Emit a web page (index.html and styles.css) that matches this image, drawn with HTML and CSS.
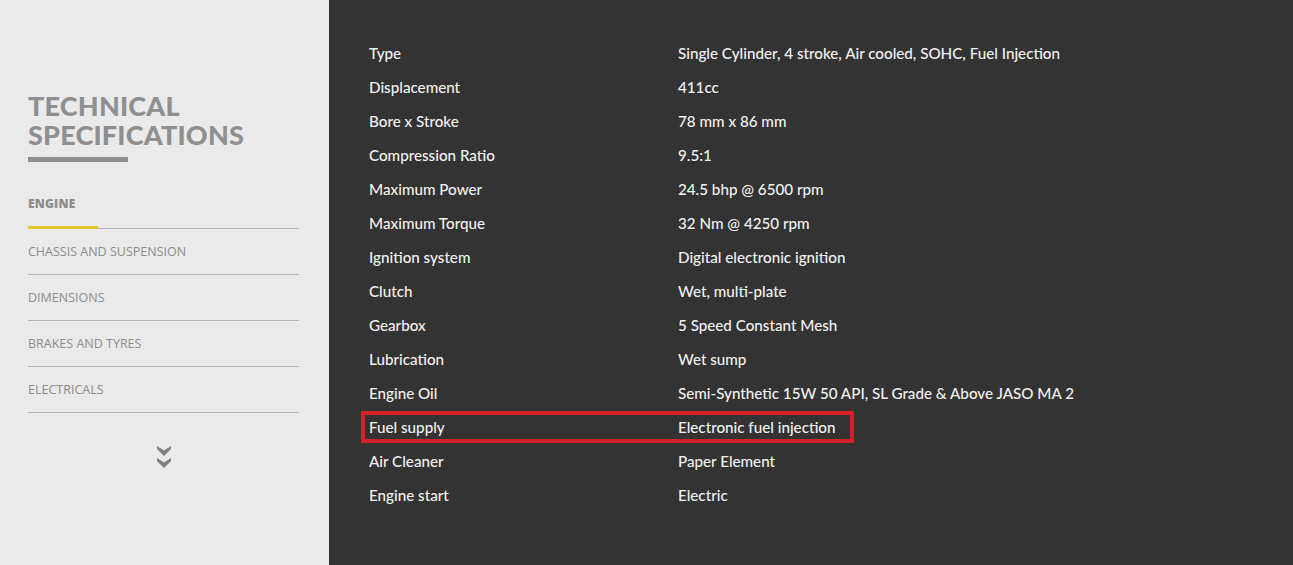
FILE: index.html
```html
<!DOCTYPE html>
<html lang="en">
<head>
<meta charset="utf-8">
<title>Technical Specifications</title>
<link rel="stylesheet" href="styles.css">
</head>
<body>
<div class="page">
  <aside class="side">
    <h1 class="title">TECHNICAL<br>SPECIFICATIONS</h1>
    <div class="title-bar"></div>
    <nav class="nav">
      <a class="nav-item active">ENGINE</a>
      <a class="nav-item">CHASSIS AND SUSPENSION</a>
      <a class="nav-item">DIMENSIONS</a>
      <a class="nav-item">BRAKES AND TYRES</a>
      <a class="nav-item">ELECTRICALS</a>
    </nav>
    <div class="more">
      <svg width="16" height="24" viewBox="0 0 16 24">
        <path d="M1 1 L8 5.5 L15 1 L15 4 L8 11 L1 4 Z" fill="#7d7d7d"/>
        <path d="M1 13 L8 17.5 L15 13 L15 16 L8 23 L1 16 Z" fill="#7d7d7d"/>
      </svg>
    </div>
  </aside>
  <main class="specs">
    <div class="row"><span class="k">Type</span><span class="v">Single Cylinder, 4 stroke, Air cooled, SOHC, Fuel Injection</span></div>
    <div class="row"><span class="k">Displacement</span><span class="v">411cc</span></div>
    <div class="row"><span class="k">Bore x Stroke</span><span class="v">78 mm x 86 mm</span></div>
    <div class="row"><span class="k">Compression Ratio</span><span class="v">9.5:1</span></div>
    <div class="row"><span class="k">Maximum Power</span><span class="v">24.5 bhp @ 6500 rpm</span></div>
    <div class="row"><span class="k">Maximum Torque</span><span class="v">32 Nm @ 4250 rpm</span></div>
    <div class="row"><span class="k">Ignition system</span><span class="v">Digital electronic ignition</span></div>
    <div class="row"><span class="k">Clutch</span><span class="v">Wet, multi-plate</span></div>
    <div class="row"><span class="k">Gearbox</span><span class="v">5 Speed Constant Mesh</span></div>
    <div class="row"><span class="k">Lubrication</span><span class="v">Wet sump</span></div>
    <div class="row"><span class="k">Engine Oil</span><span class="v">Semi-Synthetic 15W 50 API, SL Grade &amp; Above JASO MA 2</span></div>
    <div class="row highlight"><span class="k">Fuel supply</span><span class="v">Electronic fuel injection</span></div>
    <div class="row"><span class="k">Air Cleaner</span><span class="v">Paper Element</span></div>
    <div class="row"><span class="k">Engine start</span><span class="v">Electric</span></div>
  </main>
</div>
</body>
</html>
```

FILE: styles.css
```css
* { box-sizing: border-box; }
html, body { margin: 0; padding: 0; }
body {
  width: 1293px;
  height: 565px;
  overflow: hidden;
  background: #333333;
}
.page {
  display: flex;
  height: 565px;
}
.side {
  width: 329px;
  flex: none;
  background: #eaeaea;
  padding: 91px 30px 0 28px;
  display: flex;
  flex-direction: column;
}
.title {
  margin: 0;
  font-family: "Lato", "Liberation Sans", sans-serif;
  font-weight: 900;
  font-size: 27px;
  line-height: 29px;
  letter-spacing: 0.2px;
  color: #8f8f8f;
}
.title-bar {
  width: 100px;
  height: 5px;
  background: #8f8f8f;
  margin-top: 8px;
}
.nav {
  display: flex;
  flex-direction: column;
  margin-top: 30px;
}
.nav-item {
  display: block;
  position: relative;
  height: 46px;
  padding-top: 14px;
  font-family: "Open Sans", "Liberation Sans", sans-serif;
  font-size: 12.5px;
  line-height: 18px;
  color: #8c8c8c;
  border-bottom: 1px solid #b7b7b7;
}
.nav-item.active {
  height: 37px;
  padding-top: 3px;
  font-size: 12px;
  font-weight: 800;
  color: #8d8d8d;
  letter-spacing: 0.2px;
}
.nav-item.active::after {
  content: "";
  position: absolute;
  left: 0;
  bottom: -1px;
  width: 70px;
  height: 3px;
  background: #e2c72f;
}
.more {
  display: flex;
  justify-content: center;
  margin-top: 32px;
}
.specs {
  flex: 1;
  padding: 36px 0 0 40px;
  display: flex;
  flex-direction: column;
  font-family: "Lato", "Open Sans", sans-serif;
  font-size: 15.2px;
  font-weight: 500;
  color: #f2f2f2;
}
.row {
  display: flex;
  height: 34px;
  align-items: center;
  position: relative;
  width: max-content;
}
.k { width: 309px; flex: none; }
.highlight::before {
  content: "";
  position: absolute;
  left: -8px;
  right: -18px;
  top: 1px;
  bottom: 1px;
  border: 4px solid #d6202a;
}
```
